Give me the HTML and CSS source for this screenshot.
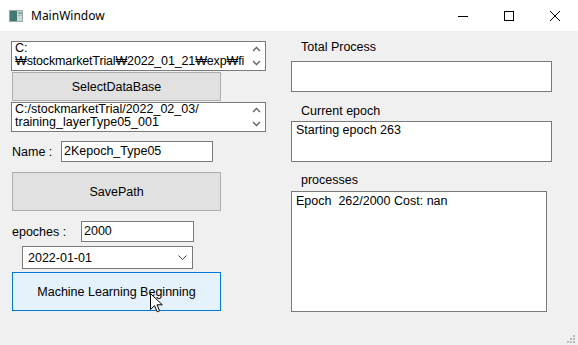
FILE: index.html
```html
<!DOCTYPE html>
<html>
<head>
<meta charset="utf-8">
<link rel="stylesheet" href="styles.css">
</head>
<body>
<div class="window">
  <div class="titlebar">
    <svg class="app-icon" width="14" height="12" viewBox="0 0 14 12">
      <rect x="0" y="0" width="14" height="12" fill="#cfd6d6"/>
      <rect x="0.5" y="0.5" width="13" height="11" fill="none" stroke="#9aa7a7"/>
      <rect x="1" y="1" width="7" height="10" fill="#3f7b74"/>
      <rect x="9" y="2" width="4" height="2" fill="#8fa4a3"/>
      <rect x="9" y="5" width="4" height="1" fill="#a9b7b6"/>
    </svg>
    <span class="title">MainWindow</span>
    <div class="controls">
      <div class="ctl"><svg width="10" height="10" viewBox="0 0 10 10"><path d="M0 5.5H10" stroke="#000" stroke-width="1"/></svg></div>
      <div class="ctl"><svg width="10" height="10" viewBox="0 0 10 10"><rect x="0.5" y="0.5" width="9" height="9" fill="none" stroke="#000"/></svg></div>
      <div class="ctl"><svg width="10" height="10" viewBox="0 0 10 10"><path d="M0 0L10 10M10 0L0 10" stroke="#000" stroke-width="1"/></svg></div>
    </div>
  </div>
  <div class="client">
    <div class="left">
      <div class="tb ta ta1">
        <div class="ta-text">
          <div class="line">C:</div>
          <div class="line">₩stockmarketTrial₩2022_01_21₩exp₩fi</div>
        </div>
        <div class="scroll">
          <svg width="9" height="6" viewBox="0 0 9 6"><path d="M1 5L4.5 1.5L8 5" fill="none" stroke="#606060" stroke-width="1.3"/></svg>
          <svg width="9" height="6" viewBox="0 0 9 6"><path d="M1 1L4.5 4.5L8 1" fill="none" stroke="#606060" stroke-width="1.3"/></svg>
        </div>
      </div>
      <div class="btn btn-select">SelectDataBase</div>
      <div class="tb ta ta2">
        <div class="ta-text">
          <div class="line">C:/stockmarketTrial/2022_02_03/</div>
          <div class="line">training_layerType05_001</div>
        </div>
        <div class="scroll">
          <svg width="9" height="6" viewBox="0 0 9 6"><path d="M1 5L4.5 1.5L8 5" fill="none" stroke="#606060" stroke-width="1.3"/></svg>
          <svg width="9" height="6" viewBox="0 0 9 6"><path d="M1 1L4.5 4.5L8 1" fill="none" stroke="#606060" stroke-width="1.3"/></svg>
        </div>
      </div>
      <div class="row row-name">
        <span class="lbl lbl-name">Name :</span>
        <div class="tb input input-name">2Kepoch_Type05</div>
      </div>
      <div class="btn btn-save">SavePath</div>
      <div class="row row-epoch">
        <span class="lbl lbl-epoch">epoches :</span>
        <div class="tb input input-epoch">2000</div>
      </div>
      <div class="tb combo">
        <span>2022-01-01</span>
        <svg width="9" height="5" viewBox="0 0 9 5"><path d="M0.5 0.5L4.5 4.5L8.5 0.5" fill="none" stroke="#444" stroke-width="1"/></svg>
      </div>
      <div class="btn btn-ml">Machine Learning Beginning</div>
    </div>
    <div class="right">
      <div class="rlabel">Total Process</div>
      <div class="tb box box-total"></div>
      <div class="rlabel rl-current">Current epoch</div>
      <div class="tb box box-current">Starting epoch 263</div>
      <div class="rlabel rl-proc">processes</div>
      <div class="tb box box-proc">Epoch &nbsp;262/2000 Cost: nan</div>
    </div>
  </div>
  <svg class="cursor" width="13" height="20" viewBox="0 0 13 20">
    <path d="M0.5 0.5V16.5L4.5 12.7L7.2 18.8L9.6 17.8L7 11.8H12.3Z" fill="#fff" stroke="#000" stroke-width="1" stroke-linejoin="miter"/>
  </svg>
  <svg class="grip" width="10" height="10" viewBox="0 0 10 10">
    <rect x="7" y="1" width="2" height="2" fill="#b8b8b8"/>
    <rect x="4" y="4" width="2" height="2" fill="#b8b8b8"/>
    <rect x="7" y="4" width="2" height="2" fill="#b8b8b8"/>
    <rect x="1" y="7" width="2" height="2" fill="#b8b8b8"/>
    <rect x="4" y="7" width="2" height="2" fill="#b8b8b8"/>
    <rect x="7" y="7" width="2" height="2" fill="#b8b8b8"/>
  </svg>
</div>
</body>
</html>
```
FILE: styles.css
```css
body {
  margin: 0;
  font-family: "Liberation Sans", Arial, sans-serif;
  font-size: 12.5px;
  color: #000;
}
.window {
  width: 578px;
  height: 345px;
  background: #f0f0f0;
  position: relative;
  overflow: hidden;
}
.titlebar {
  height: 31px;
  background: #fff;
  display: flex;
  align-items: center;
}
.app-icon {
  margin-left: 9px;
  display: block;
}
.title {
  margin-left: 8px;
  font-family: "Noto Sans", sans-serif;
  font-size: 12px;
  color: #000;
}
.controls {
  margin-left: auto;
  display: flex;
  height: 31px;
}
.ctl {
  width: 46px;
  height: 31px;
  display: flex;
  align-items: center;
  justify-content: center;
}
.ctl svg { display: block; }
.client {
  display: flex;
  height: 314px;
}
.left {
  margin-left: 11px;
  padding-top: 10px;
  width: 255px;
  display: flex;
  flex-direction: column;
  align-items: flex-start;
}
.tb {
  box-sizing: border-box;
  border: 1px solid #7a7a7a;
  background: #fff;
}
.ta {
  width: 255px;
  height: 30px;
  display: flex;
  overflow: hidden;
}
.ta2 { margin-top: 1px; }
.ta-text {
  flex: 1;
  padding-left: 3px;
  line-height: 13px;
  overflow: hidden;
  white-space: nowrap;
}
.ta1 .ta-text { letter-spacing: -0.15px; }
.scroll {
  width: 17px;
  display: flex;
  flex-direction: column;
  align-items: center;
  justify-content: space-between;
  padding: 4px 0 4px;
  box-sizing: border-box;
}
.scroll svg { display: block; }
.btn {
  box-sizing: border-box;
  width: 209px;
  margin-left: 1px;
  border: 1px solid #adadad;
  background: #e1e1e1;
  display: flex;
  align-items: center;
  justify-content: center;
}
.btn-select { height: 29px; margin-top: 1px; }
.btn-save { height: 39px; margin-top: 10px; }
.btn-ml {
  height: 39px;
  margin-top: 3px;
  border-color: #0078d7;
  background: #e5f1fb;
}
.row {
  display: flex;
  align-items: center;
  margin-left: 1px;
}
.row-name { margin-top: 9px; }
.row-epoch { margin-top: 10px; }
.lbl-name { width: 49px; }
.lbl-epoch { width: 69px; }
.input {
  height: 21px;
  padding-left: 2px;
  line-height: 19px;
}
.input-name { width: 152px; }
.input-epoch { width: 113px; }
.combo {
  margin-top: 4px;
  margin-left: 11px;
  width: 171px;
  height: 23px;
  display: flex;
  align-items: center;
  justify-content: space-between;
  padding: 0 5px 0 5px;
}
.combo svg { display: block; }
.right {
  margin-left: 25px;
  width: 261px;
  padding-top: 9px;
  display: flex;
  flex-direction: column;
  align-items: flex-start;
}
.rlabel {
  padding-left: 10px;
  line-height: 15px;
  height: 15px;
}
.rl-current { margin-top: 12px; }
.rl-proc { margin-top: 11px; }
.box {
  width: 261px;
  padding-left: 4px;
  line-height: 15px;
}
.box-total { margin-top: 6px; height: 31px; }
.box-current { margin-top: 2px; height: 41px; padding-top: 1px; }
.box-proc { margin-top: 3px; height: 121px; width: 256px; padding-top: 2px; }
.cursor {
  position: absolute;
  left: 150px;
  top: 293px;
}
.grip {
  position: absolute;
  left: 566px;
  top: 334px;
}
```
